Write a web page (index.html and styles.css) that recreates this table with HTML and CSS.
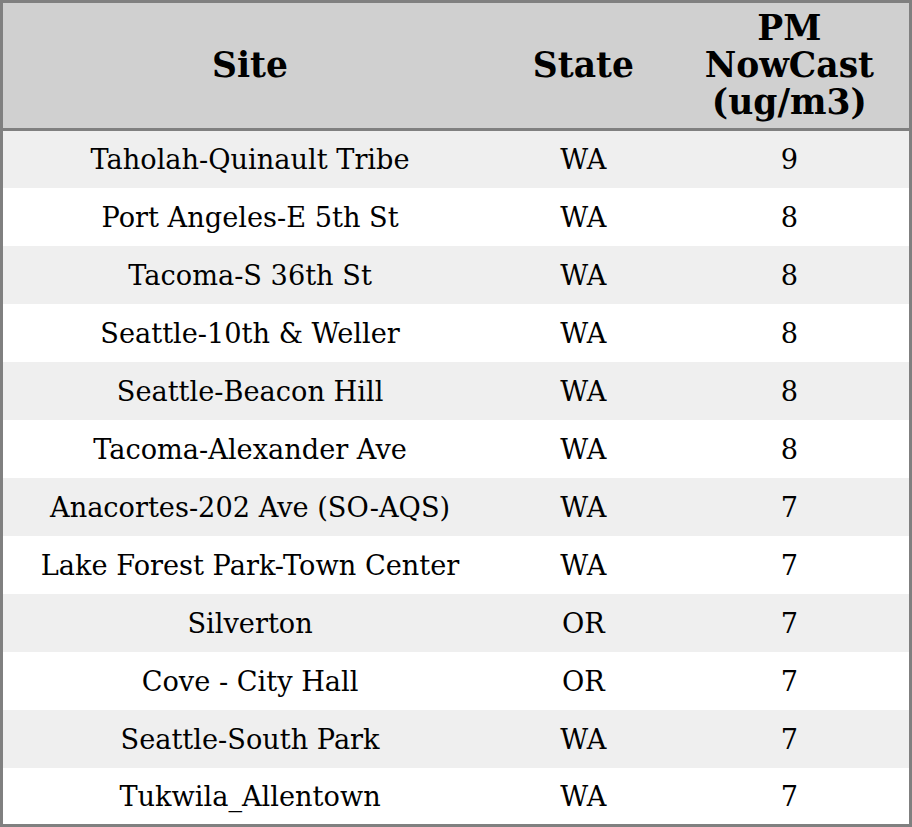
FILE: index.html
```html
<!DOCTYPE html>
<html>
<head>
<meta charset="utf-8">
<link rel="stylesheet" href="styles.css">
</head>
<body>
<table class="aq">
  <colgroup>
    <col class="c-site">
    <col class="c-state">
    <col class="c-pm">
  </colgroup>
  <thead>
    <tr><th>Site</th><th>State</th><th>PM<br>NowCast<br>(ug/m3)</th></tr>
  </thead>
  <tbody>
    <tr><td>Taholah-Quinault Tribe</td><td>WA</td><td>9</td></tr>
    <tr><td>Port Angeles-E 5th St</td><td>WA</td><td>8</td></tr>
    <tr><td>Tacoma-S 36th St</td><td>WA</td><td>8</td></tr>
    <tr><td>Seattle-10th &amp; Weller</td><td>WA</td><td>8</td></tr>
    <tr><td>Seattle-Beacon Hill</td><td>WA</td><td>8</td></tr>
    <tr><td>Tacoma-Alexander Ave</td><td>WA</td><td>8</td></tr>
    <tr><td>Anacortes-202 Ave (SO-AQS)</td><td>WA</td><td>7</td></tr>
    <tr><td>Lake Forest Park-Town Center</td><td>WA</td><td>7</td></tr>
    <tr><td>Silverton</td><td>OR</td><td>7</td></tr>
    <tr><td>Cove - City Hall</td><td>OR</td><td>7</td></tr>
    <tr><td>Seattle-South Park</td><td>WA</td><td>7</td></tr>
    <tr><td>Tukwila_Allentown</td><td>WA</td><td>7</td></tr>
  </tbody>
</table>
</body>
</html>
```
FILE: styles.css
```css
html, body {
  margin: 0;
  padding: 0;
  background: #ffffff;
}
.aq {
  width: 912px;
  border-collapse: collapse;
  table-layout: fixed;
  border: 3px solid #808080;
  font-family: "DejaVu Serif", serif;
  color: #000;
}
.c-site { width: 494px; }
.c-state { width: 172px; }
.c-pm { width: 240px; }
.aq th {
  background: #d0d0d0;
  font-weight: bold;
  font-size: 34.5px;
  line-height: 37px;
  padding: 7px 0 7px;
  text-align: center;
  border-bottom: 3px solid #808080;
}
.aq td {
  font-size: 27.2px;
  line-height: 32px;
  height: 58px;
  padding: 2px 0 0;
  text-align: center;
  vertical-align: middle;
  box-sizing: border-box;
}
.aq tbody tr:nth-child(odd) td { background: #efefef; }
.aq tbody tr:nth-child(even) td { background: #ffffff; }
```
